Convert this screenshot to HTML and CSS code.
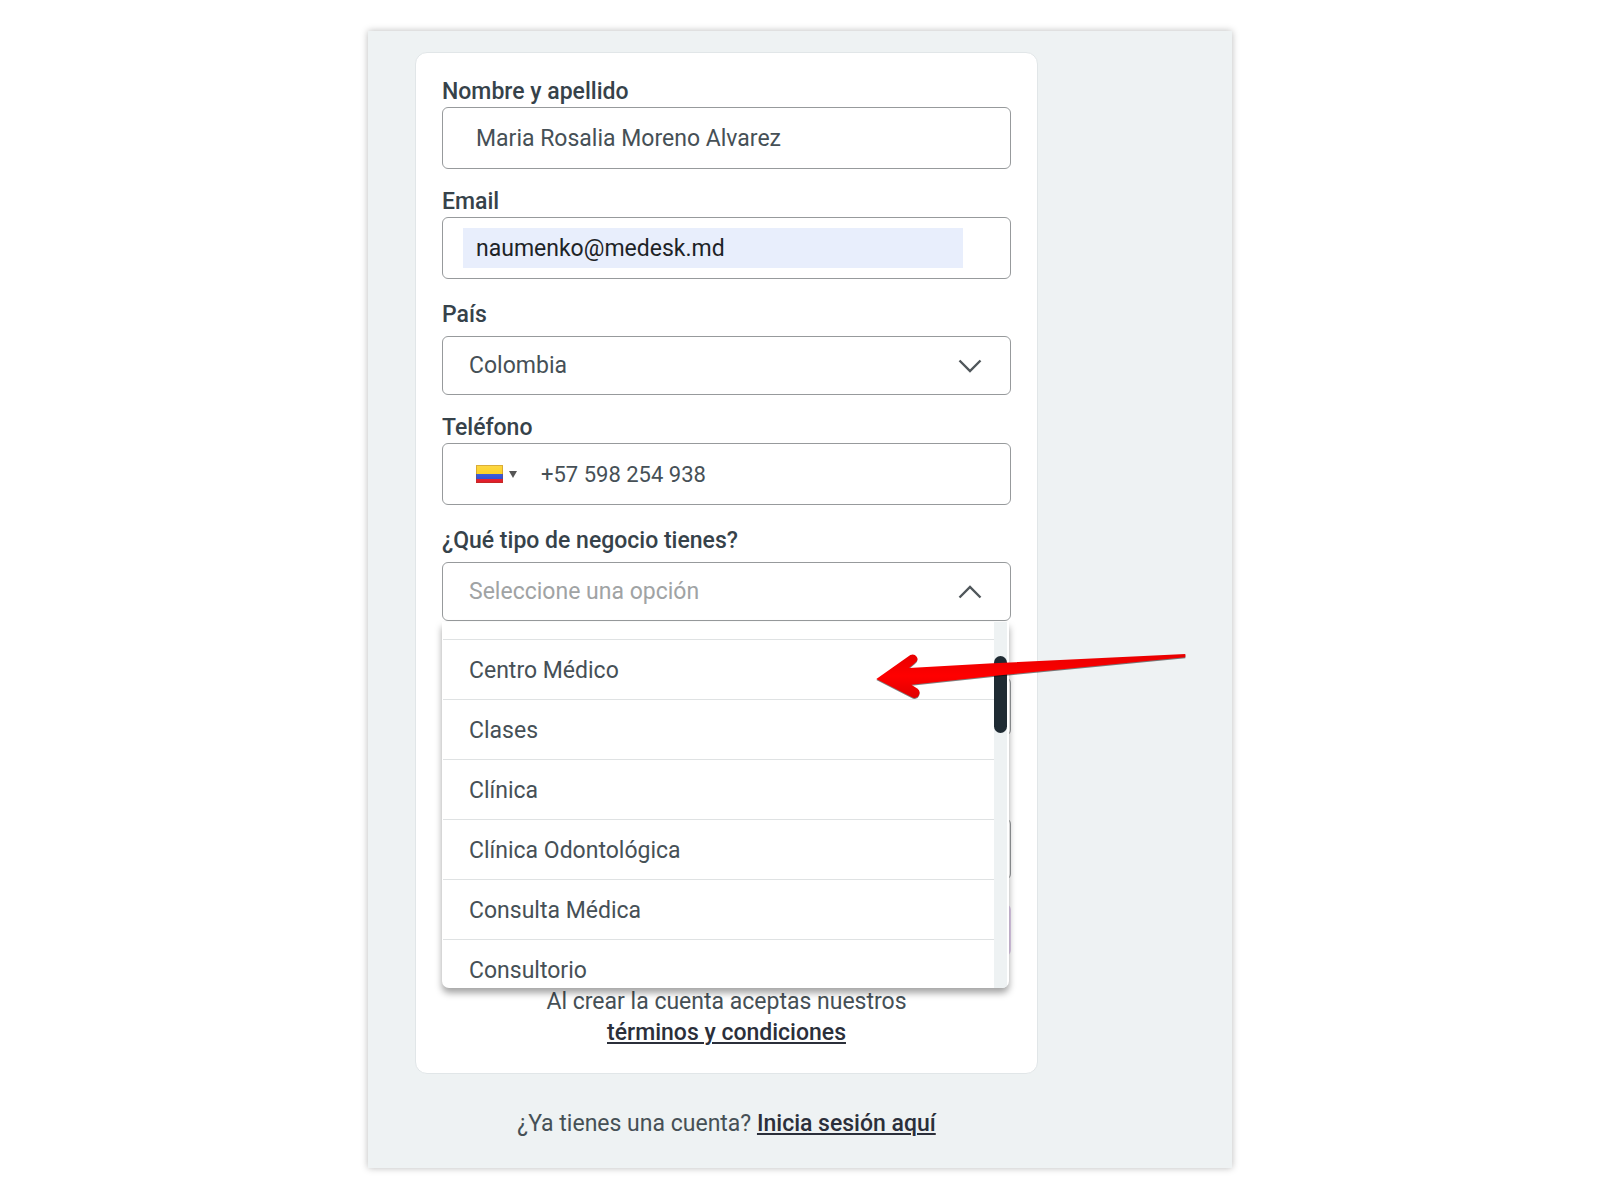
FILE: index.html
```html
<!DOCTYPE html>
<html lang="es">
<head>
<meta charset="utf-8">
<meta name="viewport" content="width=device-width, initial-scale=1">
<title>Crear cuenta</title>
<link rel="stylesheet" href="styles.css">
</head>
<body>
<main class="panel">
  <div class="column">
    <form class="card">
      <div class="field">
        <label class="label" for="name">Nombre y apellido</label>
        <div class="box"><input class="input" id="name" type="text" value="Maria Rosalia Moreno Alvarez"></div>
      </div>
      <div class="field">
        <label class="label" for="email">Email</label>
        <div class="box"><input class="input input-autofill" id="email" type="email" value="naumenko@medesk.md"></div>
      </div>
      <div class="field field-select">
        <label class="label" for="country">País</label>
        <div class="select-wrap">
          <select class="select" id="country"><option>Colombia</option></select>
          <svg class="chevron" viewBox="0 0 24 14" aria-hidden="true"><path d="M1.5 1.5 12 12 22.5 1.5"/></svg>
        </div>
      </div>
      <div class="field">
        <label class="label" for="phone">Teléfono</label>
        <div class="box box-phone">
          <button class="flag-button" type="button" aria-label="Prefijo">
            <svg class="flag" viewBox="0 0 27 18" aria-hidden="true">
              <defs><linearGradient id="gloss" x1="0" y1="0" x2="0" y2="1"><stop offset="0" stop-color="#fff" stop-opacity=".25"/><stop offset="1" stop-color="#fff" stop-opacity="0"/></linearGradient></defs>
              <rect width="27" height="9" fill="#fccb08"/><rect y="9" width="27" height="5" fill="#2447d4"/><rect y="14" width="27" height="4" fill="#e01826"/>
              <rect width="27" height="18" fill="url(#gloss)"/><rect x=".5" y=".5" width="26" height="17" fill="none" stroke="#8a4a20" stroke-opacity=".3"/>
            </svg>
            <svg class="caret" viewBox="0 0 8 7" aria-hidden="true"><path d="M0 0h8L4 7z"/></svg>
          </button>
          <input class="input input-phone" id="phone" type="tel" value="+57 598 254 938">
        </div>
      </div>
      <div class="field field-select">
        <label class="label" for="business">¿Qué tipo de negocio tienes?</label>
        <div class="select-wrap">
          <select class="select select-empty" id="business"><option>Seleccione una opción</option></select>
          <svg class="chevron" viewBox="0 0 24 14" aria-hidden="true"><path d="M1.5 12.5 12 2 22.5 12.5"/></svg>
          <div class="menu">
            <ul class="options">
              <li class="option">Centro Médico</li>
              <li class="option">Clases</li>
              <li class="option">Clínica</li>
              <li class="option">Clínica Odontológica</li>
              <li class="option">Consulta Médica</li>
              <li class="option">Consultorio</li>
            </ul>
            <div class="track"><div class="thumb"></div></div>
          </div>
          <svg class="arrow" viewBox="40 120 960 150" aria-hidden="true">
            <defs><linearGradient id="red" x1="0" y1="0" x2="0" y2="1"><stop offset="0" stop-color="#e80000"/><stop offset=".5" stop-color="#ff0000"/><stop offset="1" stop-color="#e00000"/></linearGradient></defs>
            <path class="arrow-shape" fill="url(#red)" d="M50 207 152 135Q164 130 171 140T166 159L148 174 400 160 977 132V142L400 198 155 224 174 236Q183 243 178 255T160 263Z"/>
          </svg>
        </div>
      </div>
      <input class="covered covered-short" type="text" aria-label="Especialidad">
      <input class="covered" type="password" aria-label="Contraseña">
      <button class="submit" type="button" aria-label="Crear cuenta"></button>
      <p class="terms">Al crear la cuenta aceptas nuestros<br><a class="link" href="#">términos y condiciones</a></p>
    </form>
    <p class="signin">¿Ya tienes una cuenta? <a class="link" href="#">Inicia sesión aquí</a></p>
  </div>
</main>
</body>
</html>
```
FILE: styles.css
```css
* { box-sizing: border-box; }

body {
  margin: 0;
  padding: 31px 16px;
  background: #fff;
  color: #465056;
  font: 23px/28px Roboto, sans-serif;
}

.panel {
  max-width: 864px;
  margin: 0 auto;
  padding: 21px 47px 30px;
  background: #eef2f3;
  box-shadow: 0 0 7px rgba(0, 0, 0, .28);
}

.column { max-width: 623px; }

.card {
  display: flex;
  flex-direction: column;
  padding: 25px 26px;
  border: 1px solid #e1e6e8;
  border-radius: 12px;
  background: #fff;
}

.field {
  display: flex;
  flex-direction: column;
  gap: 1px;
  margin-bottom: 19px;
}

.field-select { gap: 7px; margin-top: 3px; }

.label { color: #36424a; font-weight: 500; }

.box {
  display: flex;
  align-items: center;
  height: 62px;
  padding: 0 47px 0 20px;
  border: 1px solid #979a9c;
  border-radius: 6px;
}

.input {
  flex: 1;
  min-width: 0;
  height: 40px;
  padding: 0 13px;
  border: 0;
  background: none;
  color: inherit;
  font: inherit;
}

.input-autofill { background: #e8eefc; color: #1d2327; }

.box-phone { padding-left: 33px; }

.input-phone { padding: 0 24px; font-size: 22px; }

.flag-button {
  display: flex;
  align-items: center;
  gap: 6px;
  padding: 0;
  border: 0;
  background: none;
}

.flag { width: 27px; height: 18px; }

.caret { width: 8px; height: 7px; fill: #555; }

.select-wrap { position: relative; }

.select {
  display: block;
  width: 100%;
  height: 59px;
  padding: 0 60px 0 26px;
  border: 1px solid #979a9c;
  border-radius: 6px;
  background: #fff;
  color: inherit;
  font: inherit;
  appearance: none;
}

.select-empty { color: #a0a3a4; }

.chevron {
  position: absolute;
  top: 23px;
  right: 29px;
  width: 24px;
  height: 14px;
  fill: none;
  stroke: #50575b;
  stroke-width: 2.4;
  pointer-events: none;
}

.menu {
  position: absolute;
  top: 60px;
  left: 0;
  right: 2px;
  z-index: 1;
  display: flex;
  height: 366px;
  padding-right: 2px;
  overflow: hidden;
  border-radius: 0 0 7px 7px;
  background: #fff;
  box-shadow: 0 5px 7px rgba(0, 0, 0, .36);
}

.options {
  flex: 1;
  margin: 0;
  padding: 17px 0 0 1px;
  list-style: none;
}

.option {
  height: 60px;
  padding: 0 26px;
  border-top: 1px solid #dfe2e3;
  line-height: 61px;
}

.track {
  width: 13px;
  padding-top: 34px;
  background: #eef2f3;
}

.thumb { height: 77px; border-radius: 7px; background: #1f2b33; }

.arrow {
  position: absolute;
  top: 88px;
  left: 431px;
  z-index: 2;
  width: 320px;
  height: 50px;
  overflow: visible;
}

.arrow-shape { filter: drop-shadow(0 3px 2px rgba(0, 0, 0, .5)); }

.covered {
  height: 62px;
  margin: 42px 0 24px;
  border: 1px solid #979a9c;
  border-radius: 6px;
}

.covered-short { height: 59px; margin: 37px 0 40px; }

.submit {
  height: 52px;
  border: 0;
  border-radius: 6px;
  background: #e0cdec;
}

.terms {
  margin: 30px 0 0;
  line-height: 31px;
  text-align: center;
}

.signin { margin: 36px 0 0; text-align: center; }

.link {
  color: #2b2f3a;
  font-weight: 500;
  text-decoration-thickness: 2px;
  text-underline-offset: 2px;
}
```
